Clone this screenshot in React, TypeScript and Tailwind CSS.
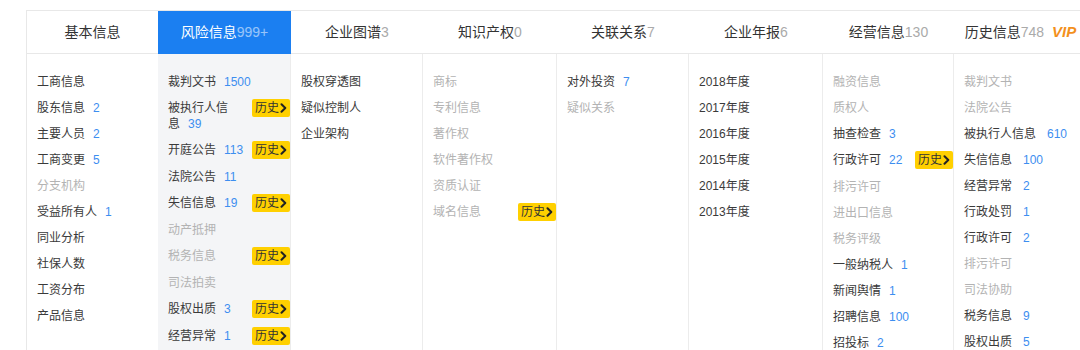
type Item = { t: string; n?: string; off?: boolean; his?: boolean };
type Col = { w: string; tab: string; count: string; vip?: boolean; active?: boolean; gap?: string; items: Item[] };

const cols: Col[] = [
  {
    w: 'w-[131px]',
    tab: '基本信息',
    count: '',
    items: [
      { t: '工商信息' },
      { t: '股东信息', n: '2' },
      { t: '主要人员', n: '2' },
      { t: '工商变更', n: '5' },
      { t: '分支机构', off: true },
      { t: '受益所有人', n: '1' },
      { t: '同业分析' },
      { t: '社保人数' },
      { t: '工资分布' },
      { t: '产品信息' },
    ],
  },
  {
    w: 'w-[133px]',
    tab: '风险信息',
    count: '999+',
    active: true,
    items: [
      { t: '裁判文书', n: '1500' },
      { t: '被执行人信\n息', n: '39', his: true },
      { t: '开庭公告', n: '113', his: true },
      { t: '法院公告', n: '11' },
      { t: '失信信息', n: '19', his: true },
      { t: '动产抵押', off: true },
      { t: '税务信息', off: true, his: true },
      { t: '司法拍卖', off: true },
      { t: '股权出质', n: '3', his: true },
      { t: '经营异常', n: '1', his: true },
      { t: '行政处罚', n: '2', his: true },
    ],
  },
  {
    w: 'w-[132px]',
    tab: '企业图谱',
    count: '3',
    items: [{ t: '股权穿透图' }, { t: '疑似控制人' }, { t: '企业架构' }],
  },
  {
    w: 'w-[134px]',
    tab: '知识产权',
    count: '0',
    items: [
      { t: '商标', off: true },
      { t: '专利信息', off: true },
      { t: '著作权', off: true },
      { t: '软件著作权', off: true },
      { t: '资质认证', off: true },
      { t: '域名信息', off: true, his: true },
    ],
  },
  {
    w: 'w-[132px]',
    tab: '关联关系',
    count: '7',
    items: [{ t: '对外投资', n: '7' }, { t: '疑似关系', off: true }],
  },
  {
    w: 'w-[134px]',
    tab: '企业年报',
    count: '6',
    items: [
      { t: '2018年度' },
      { t: '2017年度' },
      { t: '2016年度' },
      { t: '2015年度' },
      { t: '2014年度' },
      { t: '2013年度' },
    ],
  },
  {
    w: 'w-[131px]',
    tab: '经营信息',
    count: '130',
    items: [
      { t: '融资信息', off: true },
      { t: '质权人', off: true },
      { t: '抽查检查', n: '3' },
      { t: '行政许可', n: '22', his: true },
      { t: '排污许可', off: true },
      { t: '进出口信息', off: true },
      { t: '税务评级', off: true },
      { t: '一般纳税人', n: '1' },
      { t: '新闻舆情', n: '1' },
      { t: '招聘信息', n: '100' },
      { t: '招投标', n: '2' },
    ],
  },
  {
    w: 'w-[133px]',
    tab: '历史信息',
    count: '748',
    vip: true,
    gap: 'ml-[11px]',
    items: [
      { t: '裁判文书', off: true },
      { t: '法院公告', off: true },
      { t: '被执行人信息', n: '610' },
      { t: '失信信息', n: '100' },
      { t: '经营异常', n: '2' },
      { t: '行政处罚', n: '1' },
      { t: '行政许可', n: '2' },
      { t: '排污许可', off: true },
      { t: '司法协助', off: true },
      { t: '税务信息', n: '9' },
      { t: '股权出质', n: '5' },
    ],
  },
];

function HistoryBadge() {
  return (
    <span className="-mt-[1px] flex h-[18px] w-[38px] shrink-0 items-center justify-center gap-[1px] rounded-[2px] bg-[#ffd000] text-[12px] leading-none text-[#333]">
      历史
      <svg width="7" height="10" viewBox="0 0 7 10" fill="none">
        <path d="M1.5 1.2 5.3 5 1.5 8.8" stroke="#222" strokeWidth="2" strokeLinecap="round" strokeLinejoin="round" />
      </svg>
    </span>
  );
}

export default function App() {
  return (
    <div className="h-[350px] w-[1080px] overflow-hidden bg-white font-['Liberation_Sans','Noto_Sans_CJK_SC',sans-serif]">
      <div className="ml-[26px] mt-[10px] flex w-[1100px] border-l border-t border-[#e8e8e8]">
        {cols.map((c, i) => (
          <div key={c.tab} className={`${c.w} flex shrink-0 flex-col`}>
            {c.active ? (
              <div className="flex h-[43px] items-center justify-center bg-[#1b7ff1] text-[14px] text-white">
                {c.tab}
                <span className="text-white/55">{c.count}</span>
              </div>
            ) : (
              <div className="flex h-[43px] items-center justify-center border-b border-[#e8e8e8] text-[14px] text-[#333]">
                {c.tab}
                <span className="text-[#aaa]">{c.count}</span>
                {c.vip && <span className="ml-[8px] text-[15px] font-bold italic text-[#f3901c]">VIP</span>}
              </div>
            )}
            <div
              className={`h-[320px] pl-[10px] pt-[15px] ${c.active ? 'bg-[#f4f5f7]' : ''} ${
                i === 0 ? '' : 'border-r border-[#ececec]'
              }`}
            >
              {c.items.map((it) => (
                <div key={it.t} className="flex items-start py-[5px] text-[12px] leading-4">
                  <span className={`flex-1 whitespace-pre-line ${it.off ? 'text-[#b3b3b3]' : 'text-[#3a3a3a]'}`}>
                    {it.t}
                    {it.n && <span className={`${c.gap ?? 'ml-2'} text-[#3d8ef0]`}>{it.n}</span>}
                  </span>
                  {it.his && <HistoryBadge />}
                </div>
              ))}
            </div>
          </div>
        ))}
      </div>
    </div>
  );
}
